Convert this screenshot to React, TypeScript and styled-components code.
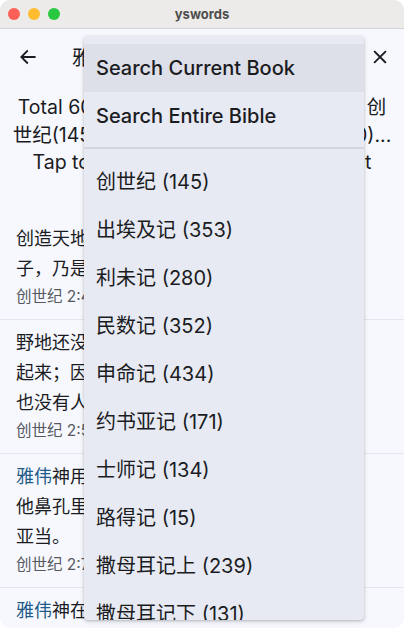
import React from 'react';
import styled, { createGlobalStyle } from 'styled-components';

const GlobalStyle = createGlobalStyle`
  html, body {
    margin: 0;
    padding: 0;
    background: #ffffff;
  }
  body {
    font-family: Inter, "Noto Sans CJK SC", sans-serif;
    color: #1b1c1f;
  }
`;

type Verse = {
  lines: React.ReactNode[];
  reference: string;
};

const Lord = () => <Name>雅伟</Name>;

const verses: Verse[] = [
  {
    lines: [<>创造天地的来历，在<Lord />神造天地的日</>, '子，乃是这样。'],
    reference: '创世纪 2:4',
  },
  {
    lines: ['野地还没有草木，田间的菜蔬还没有长', <>起来；因为<Lord />神还没有降雨在地上，</>, '也没有人耕地；'],
    reference: '创世纪 2:5',
  },
  {
    lines: [<><Lord />神用地上的尘土造人，将生气吹在</>, '他鼻孔里，他就成了有灵的活人，名叫', '亚当。'],
    reference: '创世纪 2:7',
  },
  {
    lines: [<><Lord />神在东方的伊甸立了一个园子，把</>, '所造的人安置在那里。'],
    reference: '创世纪 2:8',
  },
];

const books: [string, number][] = [
  ['创世纪', 145],
  ['出埃及记', 353],
  ['利未记', 280],
  ['民数记', 352],
  ['申命记', 434],
  ['约书亚记', 171],
  ['士师记', 134],
  ['路得记', 15],
  ['撒母耳记上', 239],
  ['撒母耳记下', 131],
  ['列王纪上', 201],
];

function App() {
  return (
    <>
      <GlobalStyle />
      <Window>
        <TitleBar>
          <Lights>
            <Light color="#fe5f57" />
            <Light color="#febc2e" />
            <Light color="#28c840" />
          </Lights>
          <WindowTitle>yswords</WindowTitle>
          <span />
        </TitleBar>

        <Header>
          <IconButton aria-label="back">
            <svg width="20" height="20" viewBox="0 0 24 24" fill="none" stroke="#1b1c1f" strokeWidth="2.2" strokeLinecap="square">
              <path d="M20 12H5" />
              <path d="M11 5l-7 7 7 7" />
            </svg>
          </IconButton>
          <HeaderTitle>雅伟 (6009)</HeaderTitle>
          <IconButton aria-label="close">
            <svg width="18" height="18" viewBox="0 0 24 24" fill="none" stroke="#1b1c1f" strokeWidth="2.4" strokeLinecap="square">
              <path d="M5 5l14 14M19 5L5 19" />
            </svg>
          </IconButton>
        </Header>

        <Summary>
          Total 6009 verses found in 39 books: 创<br />
          世纪(145)、出埃及记(353)、利未记(280)...<br />
          Tap to see results by each testament
        </Summary>

        <List>
          {verses.map((v) => (
            <VerseItem key={v.reference}>
              <VerseText>
                {v.lines.map((line, i) => (
                  <React.Fragment key={i}>
                    {line}
                    {i < v.lines.length - 1 && <br />}
                  </React.Fragment>
                ))}
              </VerseText>
              <Reference>{v.reference}</Reference>
            </VerseItem>
          ))}
        </List>

        <Menu>
          <MenuOption active>Search Current Book</MenuOption>
          <MenuOption>Search Entire Bible</MenuOption>
          <MenuDivider />
          {books.map(([name, count]) => (
            <BookOption key={name}>
              {name} ({count})
            </BookOption>
          ))}
        </Menu>
      </Window>
    </>
  );
}

const Window = styled.div`
  position: relative;
  width: 404px;
  height: 628px;
  border-radius: 10px;
  overflow: hidden;
  background: #f6f8fe;
  display: flex;
  flex-direction: column;
`;

const TitleBar = styled.div`
  height: 28px;
  flex-shrink: 0;
  background: #ecebea;
  border-bottom: 1px solid #d3d3d8;
  display: grid;
  grid-template-columns: 1fr auto 1fr;
  align-items: center;
  padding: 0 8px;
`;

const Lights = styled.div`
  display: flex;
  gap: 8px;
`;

const Light = styled.span<{ color: string }>`
  width: 12px;
  height: 12px;
  border-radius: 50%;
  background: ${(p) => p.color};
`;

const WindowTitle = styled.div`
  font-size: 13px;
  font-weight: 700;
  color: #4e4e4e;
`;

const Header = styled.div`
  height: 55px;
  flex-shrink: 0;
  display: flex;
  align-items: center;
  padding: 0 4px 0 8px;
`;

const IconButton = styled.div`
  width: 40px;
  height: 40px;
  display: flex;
  align-items: center;
  justify-content: center;
`;

const HeaderTitle = styled.div`
  flex: 1;
  margin-left: 24px;
  font-size: 20px;
`;

const Summary = styled.div`
  margin-top: 10px;
  padding: 0 8px;
  text-align: center;
  font-size: 19.5px;
  line-height: 27.5px;
  white-space: nowrap;
`;

const List = styled.div`
  margin-top: 39px;
  display: flex;
  flex-direction: column;
`;

const VerseItem = styled.div`
  padding: 8px 16px 12px;
  border-bottom: 1px solid #e4e7ee;
`;

const VerseText = styled.div`
  font-size: 18px;
  line-height: 30px;
  white-space: nowrap;
`;

const Name = styled.span`
  color: #1e5b88;
`;

const Reference = styled.div`
  margin-top: 3px;
  font-size: 15.5px;
  line-height: 20px;
  color: #56585e;
`;

const Menu = styled.div`
  position: absolute;
  top: 36px;
  left: 84px;
  width: 280px;
  height: 584px;
  overflow: hidden;
  padding-top: 8px;
  box-sizing: border-box;
  background: #e7eaf2;
  border-radius: 4px;
  box-shadow: 0 1px 3px rgba(0, 0, 0, 0.22), 0 2px 6px rgba(0, 0, 0, 0.08);
`;

const MenuOption = styled.div<{ active?: boolean }>`
  height: 48px;
  display: flex;
  align-items: center;
  padding: 0 12px;
  font-size: 20px;
  font-weight: 500;
  background: ${(p) => (p.active ? '#dde0e8' : 'transparent')};
`;

const MenuDivider = styled.div`
  height: 2px;
  margin: 7px 0 7px;
  background: #d3d6de;
`;

const BookOption = styled.div`
  height: 48px;
  display: flex;
  align-items: center;
  padding: 0 12px;
  font-size: 20px;
  white-space: nowrap;
`;

export default App;
